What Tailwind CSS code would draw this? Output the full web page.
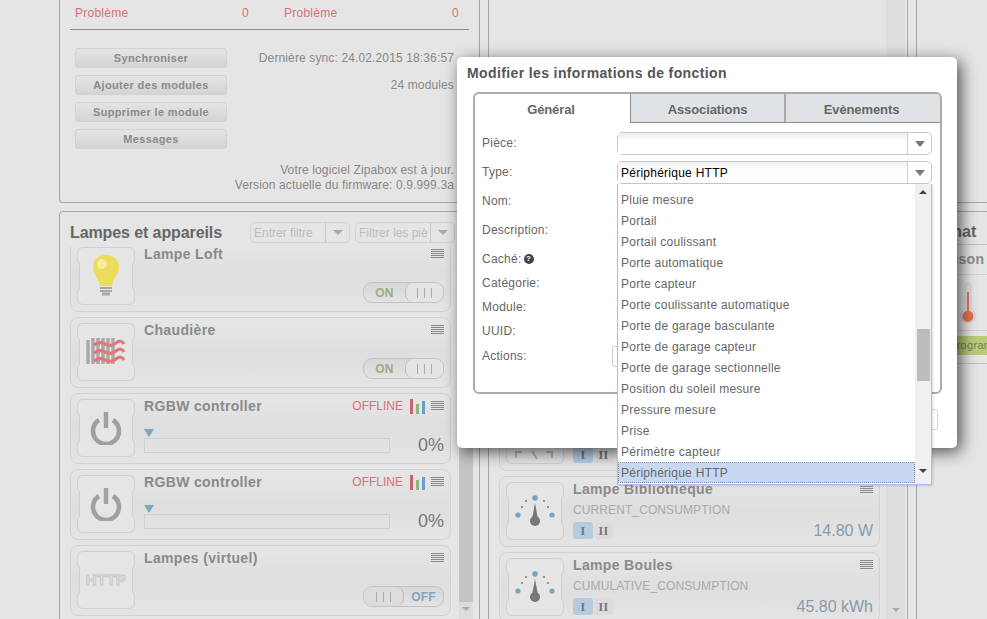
<!DOCTYPE html>
<html lang="fr">
<head>
  <meta charset="UTF-8" />
  <title>Modifier les informations de fonction</title>
  <script src="https://cdn.jsdelivr.net/npm/@tailwindcss/browser@4"></script>
</head>
<body class="bg-[#e5e5e5] font-['Liberation_Sans',Arial,sans-serif]">
<div class="relative w-[987px] h-[619px] overflow-hidden flex pl-[59px] gap-[8px] text-[12px] tracking-[0.25px] text-[#888]">

  <!-- Left column -->
  <div class="w-[421px] shrink-0 flex flex-col gap-[8px]">
    <section class="h-[203px] shrink-0 border-x border-b border-[#a6a6a6] rounded-b-[4px]">
      <div class="mx-[10px] h-[30px] pl-[5px] pb-[4px] border-b border-[#8c8c8c] flex gap-[35px] items-center text-[#d9707a]">
        <div class="w-[174px] flex justify-between"><span>Problème</span><span>0</span></div>
        <div class="w-[175px] flex justify-between"><span>Problème</span><span>0</span></div>
      </div>
      <div class="flex mt-[18px] ml-[15px]">
        <div class="w-[152px] flex flex-col gap-[7px] text-[11px] font-bold text-[#8a8a8a] text-center tracking-[0.35px]">
          <button class="h-[20px] rounded-[3px] border border-[#d2d2d2] bg-linear-to-b from-[#e4e4e4] to-[#d4d4d4]">Synchroniser</button>
          <button class="h-[20px] rounded-[3px] border border-[#d2d2d2] bg-linear-to-b from-[#e4e4e4] to-[#d4d4d4]">Ajouter des modules</button>
          <button class="h-[20px] rounded-[3px] border border-[#d2d2d2] bg-linear-to-b from-[#e4e4e4] to-[#d4d4d4]">Supprimer le module</button>
          <button class="h-[20px] rounded-[3px] border border-[#d2d2d2] bg-linear-to-b from-[#e4e4e4] to-[#d4d4d4]">Messages</button>
        </div>
        <div class="flex-1 mr-[25px] text-right whitespace-nowrap tracking-[0.13px]">
          <div class="h-[20px] leading-[20px]">Dernière sync: 24.02.2015 18:36:57</div>
          <div class="h-[20px] leading-[20px] mt-[7px]">24 modules</div>
          <div class="mt-[68px] leading-[15px]">Votre logiciel Zipabox est à jour.<br />Version actuelle du firmware: 0.9.999.3a</div>
        </div>
      </div>
    </section>

    <section class="h-[500px] shrink-0 border border-[#a6a6a6] rounded-t-[4px]">
      <header class="h-[35px] pt-[6px] pl-[10px] pr-[24px] flex items-center justify-between">
        <h2 class="text-[16px] font-bold text-[#666] tracking-[-0.1px]">Lampes et appareils</h2>
        <div class="flex gap-[5px] text-[#bcbcbc] whitespace-nowrap tracking-normal">
          <div class="w-[100px] h-[21px] rounded-[5px] border border-[#d4d4d4] flex items-center">
            <span class="flex-1 pl-[3px]">Entrer filtre</span>
            <span class="w-[24px] h-full border-l border-[#c8c8c8] flex items-center justify-center"><i class="w-0 h-0 border-x-[5px] border-t-[5px] border-x-transparent border-t-[#aaa]"></i></span>
          </div>
          <div class="w-[100px] h-[21px] rounded-[5px] border border-[#d4d4d4] flex items-center">
            <span class="flex-1 pl-[3px] overflow-hidden">Filtrer les piè</span>
            <span class="w-[24px] h-full shrink-0 border-l border-[#c8c8c8] flex items-center justify-center"><i class="w-0 h-0 border-x-[5px] border-t-[5px] border-x-transparent border-t-[#aaa]"></i></span>
          </div>
        </div>
      </header>

      <div class="flex h-[372px] overflow-hidden">
        <div class="w-[381px] ml-[10px] -mt-[6px] shrink-0 flex flex-col gap-[5px]">

          <!-- Lampe Loft -->
          <article class="h-[71px] shrink-0 rounded-[8px] border border-[#d2d2d2] bg-linear-to-b from-[#e6e6e6] via-[#dedede] to-[#e4e4e4] flex pl-[6px] pt-[5px] pr-[6px]">
            <div class="relative w-[58px] h-[58px] shrink-0 flex items-center justify-center">
              <svg class="absolute inset-0" width="58" height="58" fill="#e5e5e5" stroke="#d0d0d0"><path d="M6 .5H52a5.5 5.5 0 0 1 5.5 5.5V13q0 2-2 3V42q2 1 2 3V52a5.5 5.5 0 0 1-5.5 5.5H6A5.5 5.5 0 0 1 .5 52V45q0-2 2-3V16q-2-1-2-3V6A5.5 5.5 0 0 1 6 .5Z"/></svg>
              <svg class="relative" width="30" height="44" viewBox="0 0 30 44"><path d="M15 1C7 1 2 6 2 13c0 8 6 11 7 19h12c1-8 7-11 7-19C28 6 23 1 15 1Z" fill="#ecdc5c"/><ellipse cx="11" cy="10" rx="5" ry="5" fill="#f4ec9e"/><path d="M9 34h12M9 37h12" stroke="#a8a8a8" stroke-width="2"/><path d="M11 40h8" stroke="#a8a8a8" stroke-width="3"/></svg>
            </div>
            <div class="flex-1 ml-[9px] flex flex-col">
              <div class="h-[14px] flex justify-between items-center">
                <span class="text-[14px] font-bold text-[#8a8a8a] tracking-[0.35px]">Lampe Loft</span>
                <svg width="13" height="10" stroke="#8a8a8a"><path d="M0 .5h13M0 2.5h13M0 4.5h13M0 6.5h13M0 8.5h13"/></svg>
              </div>
              <div class="mt-[21px] self-end w-[81px] h-[21px] rounded-[9px] border border-[#c4c4c4] flex bg-linear-to-b from-[#d8d8d8] to-[#e2e2e2]">
                <span class="flex-1 flex items-center justify-center font-bold text-[#9cac84]">ON</span>
                <span class="w-[38px] rounded-[8px] border-l border-[#bbb] bg-[#e4e4e4] flex items-center justify-center gap-[6px]"><i class="w-px h-[10px] bg-[#aaa]"></i><i class="w-px h-[10px] bg-[#aaa]"></i><i class="w-px h-[10px] bg-[#aaa]"></i></span>
              </div>
            </div>
          </article>

          <!-- Chaudière -->
          <article class="h-[71px] shrink-0 rounded-[8px] border border-[#d2d2d2] bg-linear-to-b from-[#e6e6e6] via-[#dedede] to-[#e4e4e4] flex pl-[6px] pt-[5px] pr-[6px]">
            <div class="relative w-[58px] h-[58px] shrink-0 flex items-center justify-center">
              <svg class="absolute inset-0" width="58" height="58" fill="#e5e5e5" stroke="#d0d0d0"><path d="M6 .5H52a5.5 5.5 0 0 1 5.5 5.5V13q0 2-2 3V42q2 1 2 3V52a5.5 5.5 0 0 1-5.5 5.5H6A5.5 5.5 0 0 1 .5 52V45q0-2 2-3V16q-2-1-2-3V6A5.5 5.5 0 0 1 6 .5Z"/></svg>
              <svg class="relative" width="42" height="30" viewBox="0 0 42 30" fill="none"><path d="M3 3v24M8 1v28M13 1v28M18 1v28M23 1v28M28 1v28" stroke="#aaa" stroke-width="3.5" stroke-dasharray="26 2"/><path d="M9 8q5-4 11-1t11-1 8 1M9 16q5-4 11-1t11-1 8 1M9 24q5-4 11-1t11-1 8 1" stroke="#e5757a" stroke-width="3.2"/></svg>
            </div>
            <div class="flex-1 ml-[9px] flex flex-col">
              <div class="h-[14px] flex justify-between items-center">
                <span class="text-[14px] font-bold text-[#8a8a8a] tracking-[0.35px]">Chaudière</span>
                <svg width="13" height="10" stroke="#8a8a8a"><path d="M0 .5h13M0 2.5h13M0 4.5h13M0 6.5h13M0 8.5h13"/></svg>
              </div>
              <div class="mt-[21px] self-end w-[81px] h-[21px] rounded-[9px] border border-[#c4c4c4] flex bg-linear-to-b from-[#d8d8d8] to-[#e2e2e2]">
                <span class="flex-1 flex items-center justify-center font-bold text-[#9cac84]">ON</span>
                <span class="w-[38px] rounded-[8px] border-l border-[#bbb] bg-[#e4e4e4] flex items-center justify-center gap-[6px]"><i class="w-px h-[10px] bg-[#aaa]"></i><i class="w-px h-[10px] bg-[#aaa]"></i><i class="w-px h-[10px] bg-[#aaa]"></i></span>
              </div>
            </div>
          </article>

          <!-- RGBW 1 -->
          <article class="h-[71px] shrink-0 rounded-[8px] border border-[#d2d2d2] bg-linear-to-b from-[#e6e6e6] via-[#dedede] to-[#e4e4e4] flex pl-[6px] pt-[5px] pr-[6px]">
            <div class="relative w-[58px] h-[58px] shrink-0 flex items-center justify-center">
              <svg class="absolute inset-0" width="58" height="58" fill="#e5e5e5" stroke="#d0d0d0"><path d="M6 .5H52a5.5 5.5 0 0 1 5.5 5.5V13q0 2-2 3V42q2 1 2 3V52a5.5 5.5 0 0 1-5.5 5.5H6A5.5 5.5 0 0 1 .5 52V45q0-2 2-3V16q-2-1-2-3V6A5.5 5.5 0 0 1 6 .5Z"/></svg>
              <svg class="relative" width="32" height="34" viewBox="0 0 32 34" fill="none" stroke="#a0a0a0" stroke-width="4.5"><path d="M9 9a13 13 0 1 0 14 0"/><path d="M16 1v16"/></svg>
            </div>
            <div class="flex-1 ml-[9px] flex flex-col">
              <div class="h-[14px] flex items-center">
                <span class="text-[14px] font-bold text-[#8a8a8a] tracking-[0.35px] flex-1">RGBW controller</span>
                <span class="text-[#d9707a] tracking-normal mr-[7px]">OFFLINE</span>
                <svg class="mr-[6px]" width="15" height="15"><path d="M0 0h3v15H0z" fill="#c8646c"/><path d="M6 5h3v10H6z" fill="#8ab87a"/><path d="M12 2h3v13h-3z" fill="#6a9ccc"/></svg>
                <svg width="13" height="10" stroke="#8a8a8a"><path d="M0 .5h13M0 2.5h13M0 4.5h13M0 6.5h13M0 8.5h13"/></svg>
              </div>
              <div class="mt-[16px] w-0 h-0 border-x-[5px] border-t-[8px] border-x-transparent border-t-[#7aa9bd]"></div>
              <div class="flex items-center h-[15px] mt-px">
                <div class="w-[246px] h-[15px] border border-[#cfcfcf]"></div>
                <span class="flex-1 text-right text-[18px] leading-[15px] text-[#777] tracking-normal">0%</span>
              </div>
            </div>
          </article>

          <!-- RGBW 2 -->
          <article class="h-[71px] shrink-0 rounded-[8px] border border-[#d2d2d2] bg-linear-to-b from-[#e6e6e6] via-[#dedede] to-[#e4e4e4] flex pl-[6px] pt-[5px] pr-[6px]">
            <div class="relative w-[58px] h-[58px] shrink-0 flex items-center justify-center">
              <svg class="absolute inset-0" width="58" height="58" fill="#e5e5e5" stroke="#d0d0d0"><path d="M6 .5H52a5.5 5.5 0 0 1 5.5 5.5V13q0 2-2 3V42q2 1 2 3V52a5.5 5.5 0 0 1-5.5 5.5H6A5.5 5.5 0 0 1 .5 52V45q0-2 2-3V16q-2-1-2-3V6A5.5 5.5 0 0 1 6 .5Z"/></svg>
              <svg class="relative" width="32" height="34" viewBox="0 0 32 34" fill="none" stroke="#a0a0a0" stroke-width="4.5"><path d="M9 9a13 13 0 1 0 14 0"/><path d="M16 1v16"/></svg>
            </div>
            <div class="flex-1 ml-[9px] flex flex-col">
              <div class="h-[14px] flex items-center">
                <span class="text-[14px] font-bold text-[#8a8a8a] tracking-[0.35px] flex-1">RGBW controller</span>
                <span class="text-[#d9707a] tracking-normal mr-[7px]">OFFLINE</span>
                <svg class="mr-[6px]" width="15" height="15"><path d="M0 0h3v15H0z" fill="#c8646c"/><path d="M6 5h3v10H6z" fill="#8ab87a"/><path d="M12 2h3v13h-3z" fill="#6a9ccc"/></svg>
                <svg width="13" height="10" stroke="#8a8a8a"><path d="M0 .5h13M0 2.5h13M0 4.5h13M0 6.5h13M0 8.5h13"/></svg>
              </div>
              <div class="mt-[16px] w-0 h-0 border-x-[5px] border-t-[8px] border-x-transparent border-t-[#7aa9bd]"></div>
              <div class="flex items-center h-[15px] mt-px">
                <div class="w-[246px] h-[15px] border border-[#cfcfcf]"></div>
                <span class="flex-1 text-right text-[18px] leading-[15px] text-[#777] tracking-normal">0%</span>
              </div>
            </div>
          </article>

          <!-- Lampes (virtuel) -->
          <article class="h-[71px] shrink-0 rounded-[8px] border border-[#d2d2d2] bg-linear-to-b from-[#e6e6e6] via-[#dedede] to-[#e4e4e4] flex pl-[6px] pt-[5px] pr-[6px]">
            <div class="relative w-[58px] h-[58px] shrink-0 flex items-center justify-center">
              <svg class="absolute inset-0" width="58" height="58" fill="#e5e5e5" stroke="#d0d0d0"><path d="M6 .5H52a5.5 5.5 0 0 1 5.5 5.5V13q0 2-2 3V42q2 1 2 3V52a5.5 5.5 0 0 1-5.5 5.5H6A5.5 5.5 0 0 1 .5 52V45q0-2 2-3V16q-2-1-2-3V6A5.5 5.5 0 0 1 6 .5Z"/></svg>
              <span class="relative text-[15px] font-bold tracking-[0.3px] text-[#e5e5e5] [-webkit-text-stroke:1px_#c8c8c8]">HTTP</span>
            </div>
            <div class="flex-1 ml-[9px] flex flex-col">
              <div class="h-[14px] flex justify-between items-center">
                <span class="text-[14px] font-bold text-[#8a8a8a] tracking-[0.35px]">Lampes (virtuel)</span>
                <svg width="13" height="10" stroke="#8a8a8a"><path d="M0 .5h13M0 2.5h13M0 4.5h13M0 6.5h13M0 8.5h13"/></svg>
              </div>
              <div class="mt-[21px] self-end w-[81px] h-[21px] rounded-[9px] border border-[#c4c4c4] flex bg-linear-to-b from-[#d8d8d8] to-[#e2e2e2]">
                <span class="w-[40px] rounded-[8px] border-r border-[#bbb] bg-[#dcdcdc] flex items-center justify-center gap-[6px]"><i class="w-px h-[10px] bg-[#aaa]"></i><i class="w-px h-[10px] bg-[#aaa]"></i><i class="w-px h-[10px] bg-[#aaa]"></i></span>
                <span class="flex-1 flex items-center justify-center font-bold text-[#7fa6bd]">OFF</span>
              </div>
            </div>
          </article>
        </div>

        <!-- scrollbar -->
        <div class="ml-[8px] w-[14px] bg-[#dcdcdc] flex flex-col items-center">
          <div class="mt-[200px] w-full h-[155px] bg-[#c4c4c4]"></div>
          <i class="mt-[5px] w-0 h-0 border-x-[4px] border-t-[4px] border-x-transparent border-t-[#aaa]"></i>
        </div>
      </div>
    </section>
  </div>

  <!-- Middle column -->
  <div class="w-[420px] shrink-0">
    <section class="h-[760px] border-x border-[#a6a6a6] flex">
      <div class="w-[381px] ml-[10px] shrink-0 pt-[400px] flex flex-col gap-[5px]">

        <article class="h-[71px] shrink-0 rounded-[8px] border border-[#d2d2d2] bg-linear-to-b from-[#e6e6e6] via-[#dedede] to-[#e4e4e4] flex pl-[6px] pt-[5px] pr-[6px]">
          <div class="relative w-[58px] h-[58px] shrink-0">
            <svg class="absolute inset-0" width="58" height="58" fill="#e5e5e5" stroke="#d0d0d0"><path d="M6 .5H52a5.5 5.5 0 0 1 5.5 5.5V13q0 2-2 3V42q2 1 2 3V52a5.5 5.5 0 0 1-5.5 5.5H6A5.5 5.5 0 0 1 .5 52V45q0-2 2-3V16q-2-1-2-3V6A5.5 5.5 0 0 1 6 .5Z"/></svg>
            <svg class="absolute left-[8px] top-[44px]" width="42" height="10" fill="none" stroke="#b4b4b4" stroke-width="2"><path d="M2 8V2h6M18 1l5 8M32 2h6v6"/></svg>
          </div>
          <div class="flex-1 ml-[9px] flex flex-col">
            <div class="mt-[40px] flex gap-[1px]">
              <span class="w-[20px] h-[17px] rounded-[3px] bg-[#b4cbe0] text-center font-['Liberation_Serif',serif] font-bold text-[#777]">I</span>
              <span class="w-[19px] h-[17px] rounded-[3px] bg-[#dcdcdc] text-center font-['Liberation_Serif',serif] font-bold text-[#777]">II</span>
            </div>
          </div>
        </article>

        <article class="h-[71px] shrink-0 rounded-[8px] border border-[#d2d2d2] bg-linear-to-b from-[#e6e6e6] via-[#dedede] to-[#e4e4e4] flex pl-[6px] pt-[5px] pr-[6px]">
          <div class="relative w-[58px] h-[58px] shrink-0 flex items-center justify-center">
            <svg class="absolute inset-0" width="58" height="58" fill="#e5e5e5" stroke="#d0d0d0"><path d="M6 .5H52a5.5 5.5 0 0 1 5.5 5.5V13q0 2-2 3V42q2 1 2 3V52a5.5 5.5 0 0 1-5.5 5.5H6A5.5 5.5 0 0 1 .5 52V45q0-2 2-3V16q-2-1-2-3V6A5.5 5.5 0 0 1 6 .5Z"/></svg>
            <svg class="relative" width="44" height="32" viewBox="0 0 44 32"><circle cx="5" cy="20" r="2.6" fill="#7aa4ba"/><circle cx="39" cy="20" r="2.6" fill="#7aa4ba"/><circle cx="22" cy="3" r="2.8" fill="#7aa4ba"/><circle cx="9" cy="12" r="1" fill="#777"/><circle cx="35" cy="12" r="1" fill="#777"/><circle cx="13" cy="6" r="1" fill="#777"/><circle cx="31" cy="6" r="1" fill="#777"/><path d="M22 8l3 16h-6Z" fill="#777"/><circle cx="22" cy="26" r="5" fill="#777"/></svg>
          </div>
          <div class="flex-1 ml-[9px] flex flex-col">
            <div class="h-[14px] flex justify-between items-center">
              <span class="text-[14px] font-bold text-[#8a8a8a] tracking-[0.35px]">Lampe Bibliothèque</span>
              <svg width="13" height="10" stroke="#8a8a8a"><path d="M0 .5h13M0 2.5h13M0 4.5h13M0 6.5h13M0 8.5h13"/></svg>
            </div>
            <div class="mt-[7px] text-[#aaa] h-[15px] leading-[15px] tracking-[0.1px]">CURRENT_CONSUMPTION</div>
            <div class="mt-[4px] h-[17px] flex items-center justify-between">
              <div class="flex gap-[1px]">
                <span class="w-[20px] h-[17px] rounded-[3px] bg-[#b4cbe0] text-center font-['Liberation_Serif',serif] font-bold text-[#777]">I</span>
                <span class="w-[19px] h-[17px] rounded-[3px] bg-[#dcdcdc] text-center font-['Liberation_Serif',serif] font-bold text-[#777]">II</span>
              </div>
              <span class="text-[16px] leading-[17px] text-[#8a9aa8] tracking-normal">14.80 W</span>
            </div>
          </div>
        </article>

        <article class="h-[71px] shrink-0 rounded-[8px] border border-[#d2d2d2] bg-linear-to-b from-[#e6e6e6] via-[#dedede] to-[#e4e4e4] flex pl-[6px] pt-[5px] pr-[6px]">
          <div class="relative w-[58px] h-[58px] shrink-0 flex items-center justify-center">
            <svg class="absolute inset-0" width="58" height="58" fill="#e5e5e5" stroke="#d0d0d0"><path d="M6 .5H52a5.5 5.5 0 0 1 5.5 5.5V13q0 2-2 3V42q2 1 2 3V52a5.5 5.5 0 0 1-5.5 5.5H6A5.5 5.5 0 0 1 .5 52V45q0-2 2-3V16q-2-1-2-3V6A5.5 5.5 0 0 1 6 .5Z"/></svg>
            <svg class="relative" width="44" height="32" viewBox="0 0 44 32"><circle cx="5" cy="20" r="2.6" fill="#7aa4ba"/><circle cx="39" cy="20" r="2.6" fill="#7aa4ba"/><circle cx="22" cy="3" r="2.8" fill="#7aa4ba"/><circle cx="9" cy="12" r="1" fill="#777"/><circle cx="35" cy="12" r="1" fill="#777"/><circle cx="13" cy="6" r="1" fill="#777"/><circle cx="31" cy="6" r="1" fill="#777"/><path d="M22 8l3 16h-6Z" fill="#777"/><circle cx="22" cy="26" r="5" fill="#777"/></svg>
          </div>
          <div class="flex-1 ml-[9px] flex flex-col">
            <div class="h-[14px] flex justify-between items-center">
              <span class="text-[14px] font-bold text-[#8a8a8a] tracking-[0.35px]">Lampe Boules</span>
              <svg width="13" height="10" stroke="#8a8a8a"><path d="M0 .5h13M0 2.5h13M0 4.5h13M0 6.5h13M0 8.5h13"/></svg>
            </div>
            <div class="mt-[7px] text-[#aaa] h-[15px] leading-[15px] tracking-[0.1px]">CUMULATIVE_CONSUMPTION</div>
            <div class="mt-[4px] h-[17px] flex items-center justify-between">
              <div class="flex gap-[1px]">
                <span class="w-[20px] h-[17px] rounded-[3px] bg-[#b4cbe0] text-center font-['Liberation_Serif',serif] font-bold text-[#777]">I</span>
                <span class="w-[19px] h-[17px] rounded-[3px] bg-[#dcdcdc] text-center font-['Liberation_Serif',serif] font-bold text-[#777]">II</span>
              </div>
              <span class="text-[16px] leading-[17px] text-[#8a9aa8] tracking-normal">45.80 kWh</span>
            </div>
          </div>
        </article>
      </div>

      <!-- scrollbar -->
      <div class="ml-[6px] w-[19px] h-[619px] bg-[#dedede] flex flex-col items-center">
        <i class="mt-[608px] w-0 h-0 border-x-[4px] border-t-[4px] border-x-transparent border-t-[#aaa]"></i>
      </div>
    </section>
  </div>

  <!-- Right column -->
  <div class="w-[420px] shrink-0 flex flex-col gap-[8px]">
    <section class="h-[203px] shrink-0 border-x border-b border-[#a6a6a6]"></section>
    <section class="h-[500px] shrink-0 border-t border-l border-[#a6a6a6]">
      <h2 class="h-[33px] pl-[10px] pt-[11px] leading-[18px] text-[16px] font-bold text-[#666] tracking-[0.1px] border-b border-[#c4c4c4]">Climat</h2>
      <div class="mx-[8px] h-[30px] pl-[9px] flex items-center text-[14px] font-bold text-[#8a8a8a] tracking-[0.35px] border-b border-[#d2d2d2]">Maison</div>
      <div class="mx-[8px] h-[56px] pl-[35px] flex items-center border-b border-[#cfcfcf]">
        <svg width="16" height="40" viewBox="0 0 16 40"><path d="M5 3a3 3 0 0 1 6 0V26a7.5 7.5 0 1 1-6 0Z" fill="#dedede" stroke="#d0d0d0"/><path d="M7 9h2V28a5.5 5.5 0 1 1-2 0Z" fill="#e6734e"/></svg>
      </div>
      <div class="mx-[8px] mt-[5px] h-[19px] pl-[24px] bg-[#b8cc78] flex items-center text-[11px] text-[#72825a] tracking-[0.3px]">Programme</div>
      <div class="mt-[8px] border-t border-[#c4c4c4]"></div>
    </section>
  </div>

  <!-- Modal -->
  <div class="absolute left-[457px] top-[57px] w-[500px] h-[391px] bg-white rounded-[5px] shadow-[4px_4px_16px_rgba(0,0,0,0.65)]">
    <h3 class="h-[32px] pl-[10px] pt-[8px] leading-[16px] text-[14px] font-bold text-[#555] tracking-[0.38px]">Modifier les informations de fonction</h3>
    <div class="ml-[16px] mt-[3px] w-[469px] h-[302px] border-2 border-[#ababab] rounded-[6px] overflow-hidden">
      <div class="flex h-[29px] text-[13px] font-bold text-[#666] tracking-[-0.1px]">
        <div class="w-[155px] pt-[3px] pr-[3px] flex items-center justify-center">Général</div>
        <div class="w-[154px] pt-[3px] flex items-center justify-center bg-[#dfe3e6] border-l border-b border-[#8c8c8c]">Associations</div>
        <div class="flex-1 pt-[3px] pr-[3px] flex items-center justify-center bg-[#dfe3e6] border-l-2 border-b border-l-[#aaa] border-b-[#8c8c8c]">Evènements</div>
      </div>
      <div class="pt-[6px] pl-[7px] text-[#666]">
        <div class="h-[29px] flex items-center">
          <label class="w-[135px] pb-[2px]">Pièce:</label>
          <div class="w-[315px] h-[23px] rounded-[5px] border border-[#c8c8c8] flex">
            <span class="flex-1 bg-linear-to-b from-[#eeeeee] to-white to-40%"></span>
            <span class="w-[24px] border-l border-[#d0d0d0] flex items-center justify-center"><i class="w-0 h-0 border-x-[5px] border-t-[6px] border-x-transparent border-t-[#777]"></i></span>
          </div>
        </div>
        <div class="h-[29px] flex items-center">
          <label class="w-[135px] pb-[2px]">Type:</label>
          <div class="w-[315px] h-[23px] rounded-[5px] border border-[#c8c8c8] flex text-black">
            <span class="flex-1 pl-[3px] flex items-center bg-linear-to-b from-[#eeeeee] to-white to-40%">Périphérique HTTP</span>
            <span class="w-[24px] border-l border-[#d0d0d0] flex items-center justify-center"><i class="w-0 h-0 border-x-[5px] border-t-[6px] border-x-transparent border-t-[#777]"></i></span>
          </div>
        </div>
        <div class="h-[29px] pb-[2px] flex items-center">Nom:</div>
        <div class="h-[29px] pb-[2px] flex items-center">Description:</div>
        <div class="h-[29px] pb-[2px] flex items-center gap-[2px]">Caché:
          <span class="w-[10px] h-[10px] rounded-full bg-[#444] text-white text-[8px] font-bold leading-[10px] text-center tracking-normal">?</span>
        </div>
        <div class="h-[24px] -mt-[2px] pb-[2px] flex items-center">Catégorie:</div>
        <div class="h-[24px] pb-[2px] flex items-center">Module:</div>
        <div class="h-[24px] pb-[2px] flex items-center">UUID:</div>
        <div class="h-[25px] flex items-center">
          <label class="w-[130px] pb-[2px]">Actions:</label>
          <span class="w-[80px] h-[21px] rounded-[3px] border border-[#ccc]"></span>
        </div>
      </div>
    </div>
    <div class="mt-[15px] pr-[19px] flex justify-end">
      <span class="w-[80px] h-[21px] border border-[#d4d4e4] rounded-[2px]"></span>
    </div>

    <!-- Open type list -->
    <div class="absolute left-[160px] top-[127px] w-[315px] h-[301px] bg-white border border-[#a9bfe4] border-t-0 shadow-[1px_1px_2px_rgba(0,0,0,0.15)] flex text-[#666]">
      <ul class="flex-1 pt-[5px]">
        <li class="h-[21px] pl-[3px] flex items-center">Pluie mesure</li>
        <li class="h-[21px] pl-[3px] flex items-center">Portail</li>
        <li class="h-[21px] pl-[3px] flex items-center">Portail coulissant</li>
        <li class="h-[21px] pl-[3px] flex items-center">Porte automatique</li>
        <li class="h-[21px] pl-[3px] flex items-center">Porte capteur</li>
        <li class="h-[21px] pl-[3px] flex items-center">Porte coulissante automatique</li>
        <li class="h-[21px] pl-[3px] flex items-center">Porte de garage basculante</li>
        <li class="h-[21px] pl-[3px] flex items-center">Porte de garage capteur</li>
        <li class="h-[21px] pl-[3px] flex items-center">Porte de garage sectionnelle</li>
        <li class="h-[21px] pl-[3px] flex items-center">Position du soleil mesure</li>
        <li class="h-[21px] pl-[3px] flex items-center">Pressure mesure</li>
        <li class="h-[21px] pl-[3px] flex items-center">Prise</li>
        <li class="h-[21px] pl-[3px] flex items-center">Périmètre capteur</li>
        <li class="h-[21px] pl-[2px] flex items-center bg-[#c8d8f0] border border-dotted border-[#7f8fb0]">Périphérique HTTP</li>
      </ul>
      <div class="w-[16px] bg-[#f0f0f0] flex flex-col items-center">
        <i class="mt-[6px] w-0 h-0 border-x-[4px] border-b-[4px] border-x-transparent border-b-[#444]"></i>
        <div class="mt-[135px] w-[13px] h-[52px] bg-[#bcbcbc]"></div>
        <i class="mt-[88px] w-0 h-0 border-x-[4px] border-t-[4px] border-x-transparent border-t-[#444]"></i>
      </div>
    </div>
  </div>
</div>
</body>
</html>
